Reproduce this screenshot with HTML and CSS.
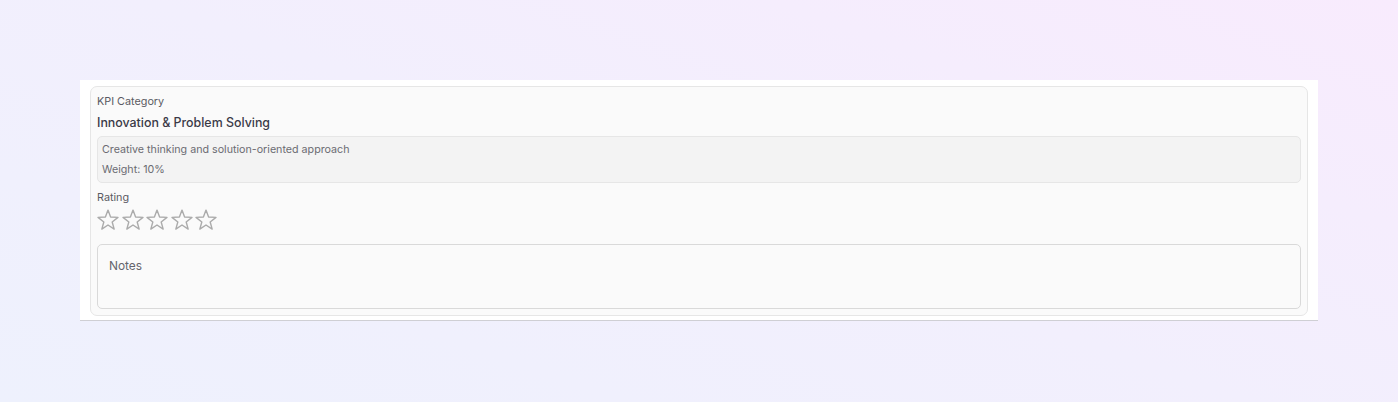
FILE: index.html
```html
<!DOCTYPE html>
<html lang="en">
<head>
<meta charset="utf-8">
<title>KPI Category</title>
<link rel="stylesheet" href="styles.css">
</head>
<body>
<div class="page">
  <div class="panel">
    <div class="card">
      <div class="label">KPI Category</div>
      <div class="title">Innovation &amp; Problem Solving</div>
      <div class="desc">
        <p>Creative thinking and solution-oriented approach</p>
        <p>Weight: 10%</p>
      </div>
      <div class="label rating-label">Rating</div>
      <div class="stars">
        <svg class="star" viewBox="0 0 22 22"><path d="M11 1.1 L13.59 8.04 L20.99 8.36 L15.18 12.96 L17.17 20.09 L11 16 L4.83 20.09 L6.82 12.96 L1.01 8.36 L8.41 8.04 Z"/></svg>
        <svg class="star" viewBox="0 0 22 22"><path d="M11 1.1 L13.59 8.04 L20.99 8.36 L15.18 12.96 L17.17 20.09 L11 16 L4.83 20.09 L6.82 12.96 L1.01 8.36 L8.41 8.04 Z"/></svg>
        <svg class="star" viewBox="0 0 22 22"><path d="M11 1.1 L13.59 8.04 L20.99 8.36 L15.18 12.96 L17.17 20.09 L11 16 L4.83 20.09 L6.82 12.96 L1.01 8.36 L8.41 8.04 Z"/></svg>
        <svg class="star" viewBox="0 0 22 22"><path d="M11 1.1 L13.59 8.04 L20.99 8.36 L15.18 12.96 L17.17 20.09 L11 16 L4.83 20.09 L6.82 12.96 L1.01 8.36 L8.41 8.04 Z"/></svg>
        <svg class="star" viewBox="0 0 22 22"><path d="M11 1.1 L13.59 8.04 L20.99 8.36 L15.18 12.96 L17.17 20.09 L11 16 L4.83 20.09 L6.82 12.96 L1.01 8.36 L8.41 8.04 Z"/></svg>
      </div>
      <textarea class="notes" placeholder="Notes"></textarea>
    </div>
  </div>
</div>
</body>
</html>
```
FILE: styles.css
```css
* { box-sizing: border-box; }
html, body { margin: 0; padding: 0; }
body {
  width: 1398px;
  height: 402px;
  overflow: hidden;
  font-family: Inter, "Noto Sans", sans-serif;
  background: linear-gradient(200deg, #f8ebfd 0%, #f2effd 50%, #eef1fd 100%);
}
.page {
  padding: 80px 80px 0 80px;
}
.panel {
  width: 1238px;
  background: #ffffff;
  border-bottom: 1px solid #cfcfd4;
  padding: 6px 10px 4px 10px;
}
.card {
  background: #fafafa;
  border: 1px solid #e6e6e6;
  border-radius: 7px;
  padding: 6px 6px 6px 6px;
  display: flex;
  flex-direction: column;
}
.label {
  padding-top: 1px;
  font-size: 10.8px;
  line-height: 16px;
  color: #5a5a62;
}
.title {
  margin-top: 2px;
  padding-top: 1px;
  font-size: 12.4px;
  line-height: 20px;
  font-weight: 500;
  color: #3a3a48;
}
.desc {
  margin-top: 3px;
  background: #f3f3f3;
  border: 1px solid #e6e6e6;
  border-radius: 5px;
  padding: 3px 4px 3px 4px;
  display: flex;
  flex-direction: column;
  gap: 1px;
}
.desc p {
  margin: 0;
  padding-top: 1px;
  font-size: 10.7px;
  line-height: 18px;
  color: #6b6b72;
}
.rating-label {
  margin-top: 6px;
}
.stars {
  margin-top: 3px;
  display: flex;
  gap: 2.5px;
  height: 22px;
}
.star {
  width: 22px;
  height: 22px;
  fill: none;
  stroke: #ababab;
  stroke-width: 1.4;
  stroke-linejoin: round;
  overflow: visible;
}
.notes {
  margin-top: 13px;
  display: block;
  width: 100%;
  height: 65px;
  resize: none;
  border: 1px solid #d9d9d9;
  border-radius: 5px;
  background: #fafafa;
  padding: 11px 11px 9px 11px;
  font-family: Inter, "Noto Sans", sans-serif;
  font-size: 11.9px;
  line-height: 20px;
  color: #333;
  outline: none;
}
.notes::placeholder {
  color: #65656d;
  opacity: 1;
}
```
